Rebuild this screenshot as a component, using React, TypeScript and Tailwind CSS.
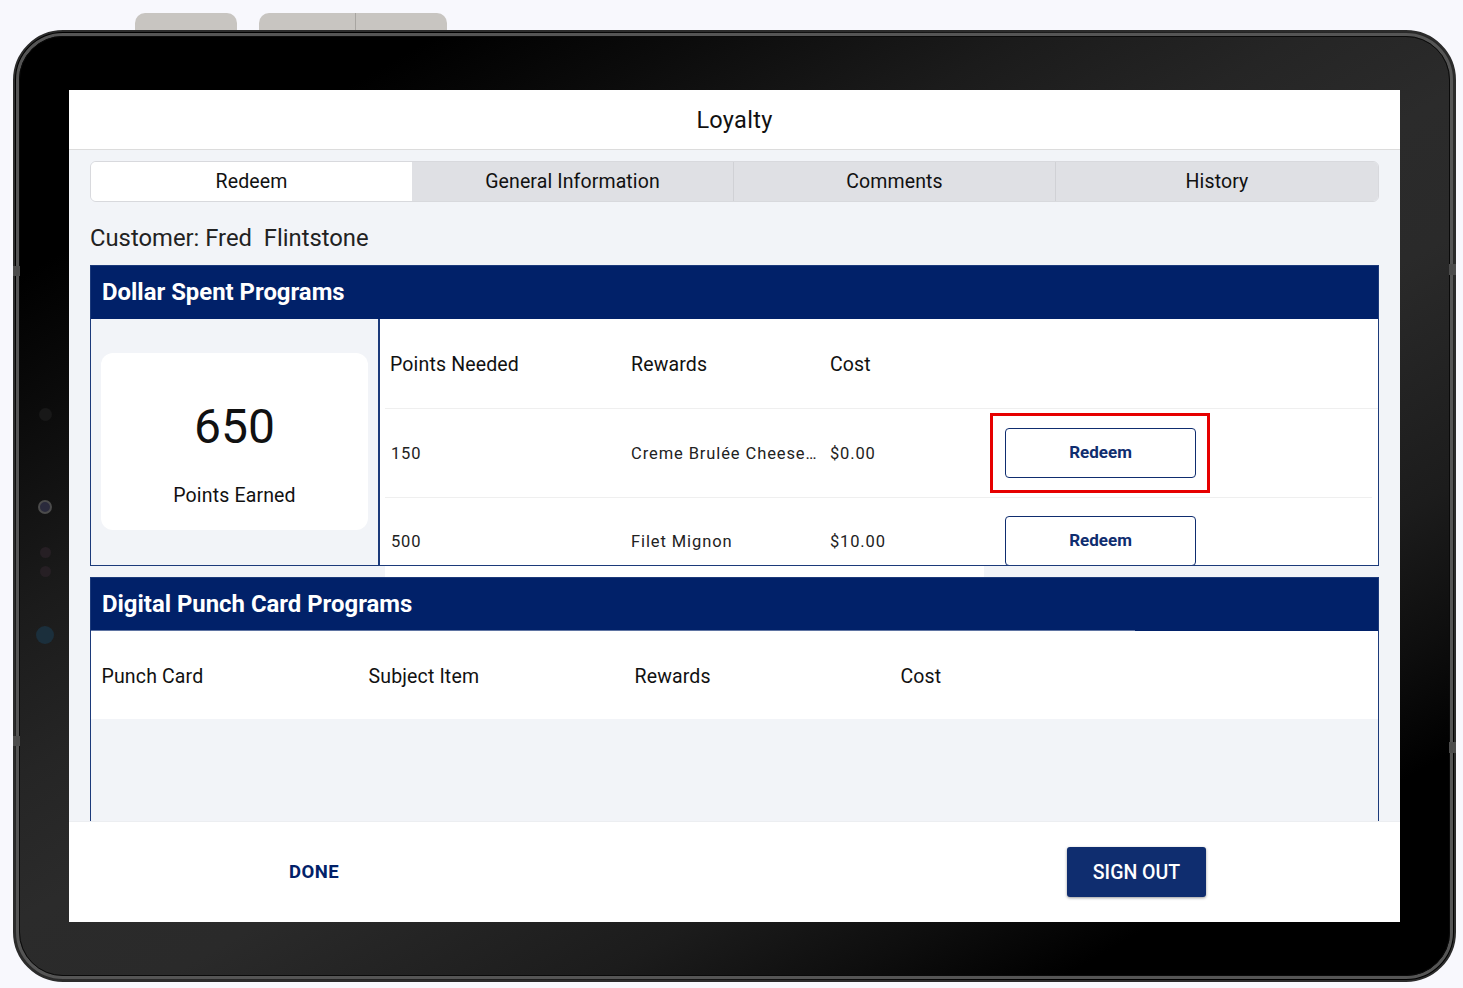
const navy = 'border-[#1c3a7a]';

function Tab({ label, active, divider, width }: { label: string; active?: boolean; divider?: boolean; width: string }) {
  return (
    <div
      className={`${width} flex items-center justify-center text-[19.5px] tracking-[0.12px] text-[#111] ${
        active ? 'bg-white' : 'bg-[#dfe0e4]'
      } ${divider ? 'border-l border-[#d0d1d5]' : ''}`}
    >
      {label}
    </div>
  );
}

function DeviceDot({ className }: { className: string }) {
  return <div className={`rounded-full blur-[0.6px] ${className}`} />;
}

function RewardRow({ points, reward, cost, first }: { points: string; reward: string; cost: string; first?: boolean }) {
  return (
    <div className={`flex h-[89px] shrink-0 items-center text-[16.5px] tracking-[0.85px] text-[#222] ${first ? 'mr-[6px] border-b border-[#efefef] pt-[2px]' : ''}`}>
      <div className="w-[246px] pl-[6px]">{points}</div>
      <div className="w-[199px] whitespace-nowrap tracking-[0.9px]">{reward}</div>
      <div className="w-[175px]">{cost}</div>
      <button className={`h-[50px] w-[191px] rounded-[4px] border border-[#0f2d6f] bg-white text-[17px] font-bold tracking-normal text-[#0f2d6f] ${first ? '-translate-y-[1px]' : '-translate-y-[2px]'}`}>
        Redeem
      </button>
    </div>
  );
}

export default function App() {
  return (
    <div className="h-[988px] w-[1463px] overflow-hidden bg-[#f8f8fd] font-['Roboto',sans-serif]">
      {/* hardware buttons on top edge */}
      <div className="flex h-[30px] items-end pl-[135px]">
        <div className="h-[17px] w-[102px] rounded-t-[10px] bg-[#c8c5c1]" />
        <div className="ml-[22px] flex h-[17px] w-[188px]">
          <div className="w-[97px] rounded-tl-[10px] border-r border-[#a8a5a1] bg-[#c8c5c1]" />
          <div className="flex-1 rounded-tr-[10px] bg-[#c8c5c1]" />
        </div>
      </div>

      {/* tablet frame */}
      <div className="relative ml-[13px] h-[952px] w-[1443px] rounded-[50px] border-[2px] border-[#2b2b2b] bg-[linear-gradient(150deg,#000_14%,#0b0b0b_22%,#1b1b1b_33%,#252525_42%,#2b2b2b_50%,#2a2a2a_58%,#1c1c1c_72%,#0e0e0e_80%,#000_87%)] bg-origin-border px-[54px] py-[58px]">
        <div className="pointer-events-none absolute inset-[1px] rounded-[47px] border-[3px] border-[#555]" />
        <div className="pointer-events-none absolute inset-[4px] rounded-[44px] border-[1px] border-[#0a0a0a]" />

        {/* antenna marks on the frame */}
        <div className="absolute -left-[2px] top-[234px] h-[10px] w-[7px] bg-[#4c4c4c]" />
        <div className="absolute -left-[2px] top-[704px] h-[10px] w-[7px] bg-[#4c4c4c]" />
        <div className="absolute -right-[2px] top-[232px] h-[11px] w-[7px] bg-[#4c4c4c]" />
        <div className="absolute -right-[2px] top-[710px] h-[11px] w-[7px] bg-[#4c4c4c]" />

        <div className="absolute left-[21px] top-[376px] flex w-[18px] flex-col items-center">
          <DeviceDot className="h-[13px] w-[13px] bg-[#181818]" />
          <DeviceDot className="mt-[79px] h-[14px] w-[14px] border-[2px] border-[#4b4b4b] bg-[#2a2a3c]" />
          <DeviceDot className="mt-[33px] h-[11px] w-[11px] bg-[#261f24]" />
          <DeviceDot className="mt-[8px] h-[11px] w-[11px] bg-[#261f24]" />
          <DeviceDot className="mt-[49px] h-[18px] w-[18px] bg-[#1b2f3c]" />
        </div>

        {/* screen */}
        <div className="relative flex h-[832px] w-[1331px] flex-col overflow-hidden bg-[#f2f4f8]">
          <div className="flex h-[60px] shrink-0 items-center justify-center border-b border-[#dcdcdc] bg-white pt-[2px] text-[23.5px] tracking-[0.3px] text-[#111]">
            Loyalty
          </div>

          <div className="flex min-h-0 flex-1 flex-col px-[21px] pt-[11px]">
            <div className="flex h-[41px] shrink-0 overflow-hidden rounded-[6px] border border-[#d8d9dd]">
              <Tab label="Redeem" active width="w-[321px]" />
              <Tab label="General Information" width="w-[321px]" />
              <Tab label="Comments" divider width="w-[322px]" />
              <Tab label="History" divider width="flex-1" />
            </div>

            <div className="flex h-[63px] shrink-0 items-center pt-[10px] text-[23.8px] text-[#222]">
              <span className="whitespace-pre">Customer: Fred  Flintstone</span>
            </div>

            {/* dollar spent programs */}
            <div className={`flex h-[301px] shrink-0 flex-col overflow-hidden border ${navy}`}>
              <div className="flex h-[53px] shrink-0 items-center bg-[#012169] pl-[11px] text-[23.9px] font-bold text-white">
                Dollar Spent Programs
              </div>
              <div className="flex min-h-0 flex-1">
                <div className={`w-[289px] shrink-0 border-r-2 ${navy} pl-[10px] pt-[34px]`}>
                  <div className="flex h-[177px] w-[267px] flex-col items-center rounded-[12px] bg-white">
                    <div className="mt-[44px] text-[48px] leading-[60px] text-[#111]">650</div>
                    <div className="mt-[24px] text-[19.5px] tracking-[0.15px] text-[#111]">Points Earned</div>
                  </div>
                </div>
                <div className="flex min-w-0 flex-1 flex-col overflow-hidden bg-white pl-[5px]">
                  <div className="flex h-[90px] shrink-0 items-center border-b border-[#efefef] pt-[2px] text-[19.5px] tracking-[0.15px] text-[#111]">
                    <div className="w-[246px] pl-[5px]">Points Needed</div>
                    <div className="w-[199px]">Rewards</div>
                    <div>Cost</div>
                  </div>
                  <RewardRow points="150" reward="Creme Brulée Cheese…" cost="$0.00" first />
                  <RewardRow points="500" reward="Filet Mignon" cost="$10.00" />
                </div>
              </div>
            </div>

            <div className="flex h-[11px] shrink-0 pl-[295px]">
              <div className="h-full w-[599px] bg-white" />
            </div>

            {/* digital punch card programs */}
            <div className={`flex min-h-0 flex-1 flex-col border border-b-0 ${navy}`}>
              <div className="flex h-[52px] shrink-0 items-center bg-[#012169] pl-[11px] pt-[2px] text-[23.9px] font-bold text-white">
                Digital Punch Card Programs
              </div>
              <div className="flex h-[1px] shrink-0 bg-[#012169]">
                <div className="h-full w-[1044px] bg-[#5f74a2]" />
              </div>
              <div className="flex h-[88px] shrink-0 items-center bg-white pl-[10.5px] pt-[4px] text-[19.5px] tracking-[0.15px] text-[#111]">
                <div className="w-[267px]">Punch Card</div>
                <div className="w-[266px]">Subject Item</div>
                <div className="w-[266px]">Rewards</div>
                <div>Cost</div>
              </div>
            </div>
          </div>

          {/* footer */}
          <div className="flex h-[101px] shrink-0 items-center border-t border-[#eceef1] bg-white">
            <div className="w-[490px] pt-[2px] text-center text-[18.5px] font-bold tracking-[0.5px] text-[#012169]">DONE</div>
            <button className="ml-[508px] h-[50px] w-[139px] rounded-[3px] bg-[#0f2d6f] pt-[1px] text-[19.5px] font-medium text-white shadow-[0_1px_3px_rgba(0,0,0,0.4)]">
              SIGN OUT
            </button>
          </div>

          {/* annotation */}
          <div className="absolute left-[921px] top-[323px] h-[80px] w-[220px] border-[3px] border-[#e60000]" />
        </div>
      </div>
    </div>
  );
}
